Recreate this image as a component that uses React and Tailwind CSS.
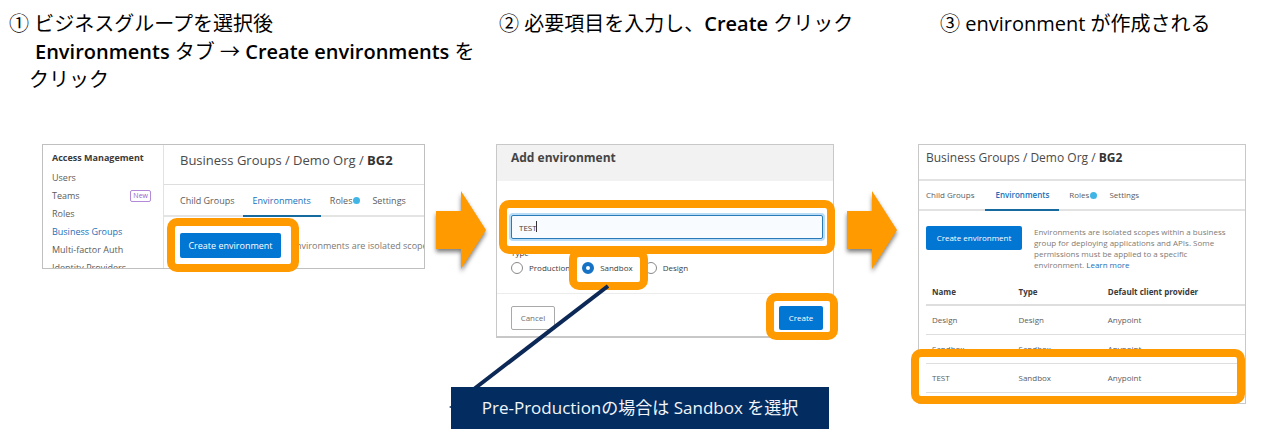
import React from "react";

const sidebarLinks = ["Users", "Teams", "Roles", "Business Groups", "Multi-factor Auth", "Identity Providers"];

const environments = [
  { name: "Design", type: "Design", provider: "Anypoint" },
  { name: "Sandbox", type: "Sandbox", provider: "Anypoint" },
  { name: "TEST", type: "Sandbox", provider: "Anypoint" },
];

function Highlight({ className }) {
  return (
    <div
      aria-hidden="true"
      className={`pointer-events-none absolute rounded-[10px] border-8 border-[#ff9a00] ${className}`}
    />
  );
}

function Arrow({ className }) {
  return (
    <svg
      aria-hidden="true"
      width="50"
      height="80"
      viewBox="0 0 50 80"
      className={`mt-[47px] shrink-0 overflow-visible drop-shadow-[0_3px_2px_rgba(0,0,0,0.5)] ${className}`}
    >
      <path d="M0 20H25V0L50 39L25 78V58H0Z" fill="#ff9a00" />
    </svg>
  );
}

function Breadcrumb() {
  return (
    <>
      Business Groups / Demo Org / <b className="font-bold text-[#333]">BG2</b>
    </>
  );
}

function Dot() {
  return <span className="inline-block size-[7px] shrink-0 rounded-full bg-[#41b6e6]" />;
}

function TypeOption({ label, defaultChecked }) {
  return (
    <label className="flex items-center gap-[6px]">
      <input
        type="radio"
        name="type"
        defaultChecked={defaultChecked}
        className="size-3 appearance-none rounded-full border border-[#8a8a8a] bg-white checked:border-4 checked:border-[#1572c4]"
      />
      {label}
    </label>
  );
}

function AccessPanel() {
  return (
    <section className="relative min-w-0 flex-[383]">
      <div className="flex h-[125px] overflow-hidden border border-[#c0c0c0] bg-white">
        <nav className="w-[121px] shrink-0 border-r border-[#e2e2e2] pl-[9px] pt-1 text-[9px] leading-[18px] text-[#5c5c5c]">
          <h3 className="mb-[2px] font-bold text-[#3a3a3a]">Access Management</h3>
          <ul>
            {sidebarLinks.map((label) => (
              <li key={label} className="flex items-center justify-between pr-3">
                <a href="#" className={label === "Business Groups" ? "font-medium text-[#1a6fb8]" : ""}>
                  {label}
                </a>
                {label === "Teams" && (
                  <span className="rounded-[2px] border border-[#b28ad8] px-[2px] text-[7px] leading-[10px] text-[#9a63c9]">
                    New
                  </span>
                )}
              </li>
            ))}
          </ul>
        </nav>
        <div className="min-w-0 flex-1 whitespace-nowrap text-[9px] text-[#5c5c5c]">
          <h3 className="h-10 border-b border-[#dedede] pl-4 pt-[6px] text-[13px] leading-[18px] text-[#4a4a4a]">
            <Breadcrumb />
          </h3>
          <nav className="flex h-8 border-b-2 border-[#e4e4e4] pl-4 leading-[31px]">
            <a href="#">Child Groups</a>
            <a href="#" className="ml-2 h-8 border-b-2 border-[#176a9e] px-[10px] font-medium text-[#1a6fb8]">
              Environments
            </a>
            <a href="#" className="ml-[9px] flex items-center gap-px">
              Roles
              <Dot />
            </a>
            <a href="#" className="ml-3">Settings</a>
          </nav>
          <div className="flex items-center gap-[10px] pl-4 pt-4">
            <button type="button" className="h-[25px] w-[101px] shrink-0 rounded-[2px] bg-[#0176d3] text-white">
              Create environment
            </button>
            <p className="text-[#7d7872]">Environments are isolated scopes within a business</p>
          </div>
        </div>
      </div>
      <Highlight className="left-[125px] top-[74px] h-[54px] w-[132px]" />
    </section>
  );
}

function AddPanel() {
  return (
    <section className="relative min-w-0 flex-[338]">
      <form
        className="border border-b-2 border-[#c8c8c8] bg-white text-[8px] text-[#3c3c3c]"
        onSubmit={(e) => e.preventDefault()}
      >
        <h3 className="h-9 bg-[#f2f2f2] pl-[14px] pt-1 text-[12px] font-bold leading-[18px] text-[#444]">
          Add environment
        </h3>
        <div className="pb-[19px] pl-[14px] pr-[10px] pt-[34px]">
          <input
            aria-label="Name"
            defaultValue="TEST"
            className="block h-6 w-full rounded-[2px] border border-[#2a7ab8] bg-[#f8fbff] px-[7px] ring-2 ring-[#b9dcf7] outline-none"
          />
          <fieldset className="pt-2">
            <legend className="float-left w-full text-[8px] leading-3">Type</legend>
            <div className="clear-both flex items-center gap-3 pt-[3px] leading-3">
              <TypeOption label="Production" />
              <TypeOption label="Sandbox" defaultChecked />
              <TypeOption label="Design" />
            </div>
          </fieldset>
        </div>
        <div className="flex justify-between border-t border-[#ececec] pb-[6px] pl-[14px] pr-[10px] pt-3">
          <button type="button" className="h-6 w-11 rounded-[2px] border border-[#a9a9a9] text-[#6f6f6f]">
            Cancel
          </button>
          <button type="submit" className="h-6 w-11 rounded-[2px] bg-[#0176d3] text-white">
            Create
          </button>
        </div>
      </form>
      <span aria-hidden="true" className="absolute left-10 top-[77px] h-[11px] w-px bg-[#333]" />
      <Highlight className="left-[73px] top-[105px] h-[41px] w-[79px]" />
      <Highlight className="-right-px left-[3px] top-[56px] h-[54px]" />
      <Highlight className="-right-1 top-[149px] h-[47px] w-[72px]" />
      <svg
        aria-hidden="true"
        width="160"
        height="126"
        viewBox="0 0 160 126"
        className="absolute -left-[47px] top-[140px]"
      >
        <path d="M159 2L25 105" stroke="#0b2856" strokeWidth="4" />
        <path d="M0 123L4 121V125Z" fill="#0b2856" />
      </svg>
      <p className="absolute -left-[45px] top-[243px] h-[42px] w-[378px] whitespace-nowrap bg-[#032d60] text-center text-[17px] leading-[42px] text-[#f1f5fa]">
        Pre-Productionの場合は Sandbox を選択
      </p>
    </section>
  );
}

function ResultPanel() {
  return (
    <section className="relative min-w-0 flex-[328]">
      <div className="border border-[#c8c8c8] bg-white pb-[10px] text-[8px] text-[#5c5c5c]">
        <h3 className="h-9 border-b-2 border-[#e2e2e2] pl-[7px] pt-1 text-[12px] leading-[18px] text-[#4a4a4a]">
          <Breadcrumb />
        </h3>
        <nav className="flex h-[30px] border-b-2 border-[#e2e2e2] pl-[7px] leading-7">
          <a href="#">Child Groups</a>
          <a href="#" className="ml-[11px] h-[30px] border-b-2 border-[#176a9e] px-[10px] font-semibold text-[#1a6fb8]">
            Environments
          </a>
          <a href="#" className="ml-[10px] flex items-center gap-px">
            Roles
            <Dot />
          </a>
          <a href="#" className="ml-3">Settings</a>
        </nav>
        <div className="flex items-start gap-3 pl-[7px] pr-2 pt-[15px]">
          <button type="button" className="h-6 w-24 shrink-0 rounded-[2px] bg-[#0176d3] text-white">
            Create environment
          </button>
          <p className="leading-[11px] text-[#807b76]">
            Environments are isolated scopes within a business group for deploying applications and APIs. Some
            permissions must be applied to a specific environment.{" "}
            <a href="#" className="text-[#1a6fb8]">Learn more</a>
          </p>
        </div>
        <div className="pl-[7px] pt-[9px]">
          <table className="w-full table-fixed text-left">
            <thead>
              <tr className="h-[26px] border-b-2 border-[#dedede] text-[#3a3a3a]">
                <th className="w-[29%] pl-[6px] font-bold">Name</th>
                <th className="w-[28%] font-bold">Type</th>
                <th className="font-bold">Default client provider</th>
              </tr>
            </thead>
            <tbody>
              {environments.map((row) => (
                <tr key={row.name} className="h-[29px] border-b border-[#dedede]">
                  <td className="pl-[6px]">{row.name}</td>
                  <td>{row.type}</td>
                  <td>{row.provider}</td>
                </tr>
              ))}
            </tbody>
          </table>
        </div>
      </div>
      <Highlight className="-left-[7px] right-px top-[205px] h-[55px]" />
    </section>
  );
}

export default function App() {
  return (
    <main className="bg-white pb-9 pt-[10px] font-['Open_Sans','Noto_Sans_CJK_JP',sans-serif]">
      <header className="grid grid-cols-[490fr_441fr_333fr] whitespace-nowrap pl-[9px] text-[20px] leading-7 text-black">
        <h2>
          ① ビジネスグループを選択後
          <span className="block pl-[26px]">
            <b className="font-semibold">Environments</b> タブ → <b className="font-semibold">Create environments</b> を
          </span>
          <span className="block pl-5">クリック</span>
        </h2>
        <h2>
          ② 必要項目を入力し、<b className="font-semibold">Create</b> クリック
        </h2>
        <h2>③ environment が作成される</h2>
      </header>
      <div className="mt-[50px] flex items-start pl-[42px] pr-[27px]">
        <AccessPanel />
        <Arrow className="ml-[11px] mr-[10px]" />
        <AddPanel />
        <Arrow className="ml-[13px] mr-[21px]" />
        <ResultPanel />
      </div>
    </main>
  );
}
